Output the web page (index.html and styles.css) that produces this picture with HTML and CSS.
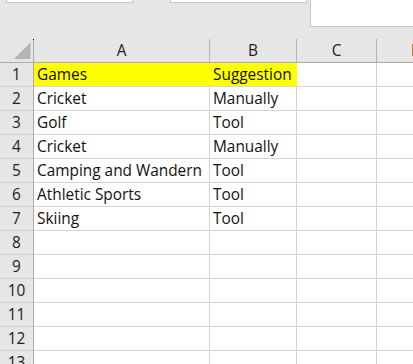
FILE: index.html
```html
<!DOCTYPE html>
<html>
<head>
<meta charset="utf-8">
<link rel="stylesheet" href="styles.css">
</head>
<body>
<div class="top">
  <div class="box box1"></div>
  <div class="box box2"></div>
  <div class="box box3"></div>
</div>
<div class="sheet">
  <div class="corner"><svg width="34" height="23" viewBox="0 0 34 23"><polygon points="30.5,3.5 30.5,20 14,20" fill="#b4b4b4"/></svg></div>
  <div class="ch">A</div><div class="ch">B</div><div class="ch">C</div><div class="ch">D</div>

  <div class="rh">1</div><div class="c hl">Games</div><div class="c hl">Suggestion</div><div class="c"></div><div class="c"></div>
  <div class="rh">2</div><div class="c">Cricket</div><div class="c">Manually</div><div class="c"></div><div class="c"></div>
  <div class="rh">3</div><div class="c">Golf</div><div class="c">Tool</div><div class="c"></div><div class="c"></div>
  <div class="rh">4</div><div class="c">Cricket</div><div class="c">Manually</div><div class="c"></div><div class="c"></div>
  <div class="rh">5</div><div class="c">Camping and Wandern</div><div class="c">Tool</div><div class="c"></div><div class="c"></div>
  <div class="rh">6</div><div class="c">Athletic Sports</div><div class="c">Tool</div><div class="c"></div><div class="c"></div>
  <div class="rh">7</div><div class="c">Skiing</div><div class="c">Tool</div><div class="c"></div><div class="c"></div>
  <div class="rh">8</div><div class="c"></div><div class="c"></div><div class="c"></div><div class="c"></div>
  <div class="rh">9</div><div class="c"></div><div class="c"></div><div class="c"></div><div class="c"></div>
  <div class="rh">10</div><div class="c"></div><div class="c"></div><div class="c"></div><div class="c"></div>
  <div class="rh">11</div><div class="c"></div><div class="c"></div><div class="c"></div><div class="c"></div>
  <div class="rh">12</div><div class="c"></div><div class="c"></div><div class="c"></div><div class="c"></div>
  <div class="rh">13</div><div class="c"></div><div class="c"></div><div class="c"></div><div class="c"></div>
</div>
</body>
</html>
```

FILE: styles.css
```css
html, body {
  margin: 0;
  padding: 0;
  background: #ffffff;
}
body {
  width: 413px;
  height: 364px;
  overflow: hidden;
  font-family: "Open Sans", "Liberation Sans", sans-serif;
  font-size: 15.4px;
  color: #111;
}
.top {
  height: 39px;
  background: #e6e6e6;
  display: flex;
  align-items: flex-start;
}
.box {
  background: #ffffff;
  border: 1px solid #c6c6c6;
  border-top: none;
  box-sizing: border-box;
}
.box1 {
  margin-left: 6px;
  width: 127px;
  height: 3px;
}
.box2 {
  margin-left: 37px;
  width: 137px;
  height: 3px;
}
.box3 {
  margin-left: 3px;
  flex: 1;
  height: 27px;
  border-right: none;
}
.sheet {
  display: grid;
  grid-template-columns: 34px 176px 87px 80px 80px;
  grid-auto-rows: 24px;
  width: 457px;
}
.sheet > div {
  box-sizing: border-box;
  line-height: 23px;
  white-space: nowrap;
  overflow: hidden;
}
.corner {
  position: relative;
  background: #e6e6e6;
  border-right: 1px solid #ababab;
  border-bottom: 1px solid #ababab;
  overflow: visible !important;
}
.corner svg {
  display: block;
}
.corner::after {
  content: "";
  position: absolute;
  right: -1px;
  top: 0;
  width: 1px;
  height: 1px;
  background: #000;
}
.ch {
  background: #e6e6e6;
  border-right: 1px solid #b4b4b4;
  border-bottom: 1px solid #ababab;
  text-align: center;
  color: #222;
}
.rh {
  background: #e6e6e6;
  border-right: 1px solid #ababab;
  border-bottom: 1px solid #d0d0d0;
  text-align: center;
  color: #222;
}
.c {
  border-right: 1px solid #d4d4d4;
  border-bottom: 1px solid #d4d4d4;
  padding-left: 3px;
}
.hl {
  background: #ffff00;
  border-right-color: #ffff00;
}
```
